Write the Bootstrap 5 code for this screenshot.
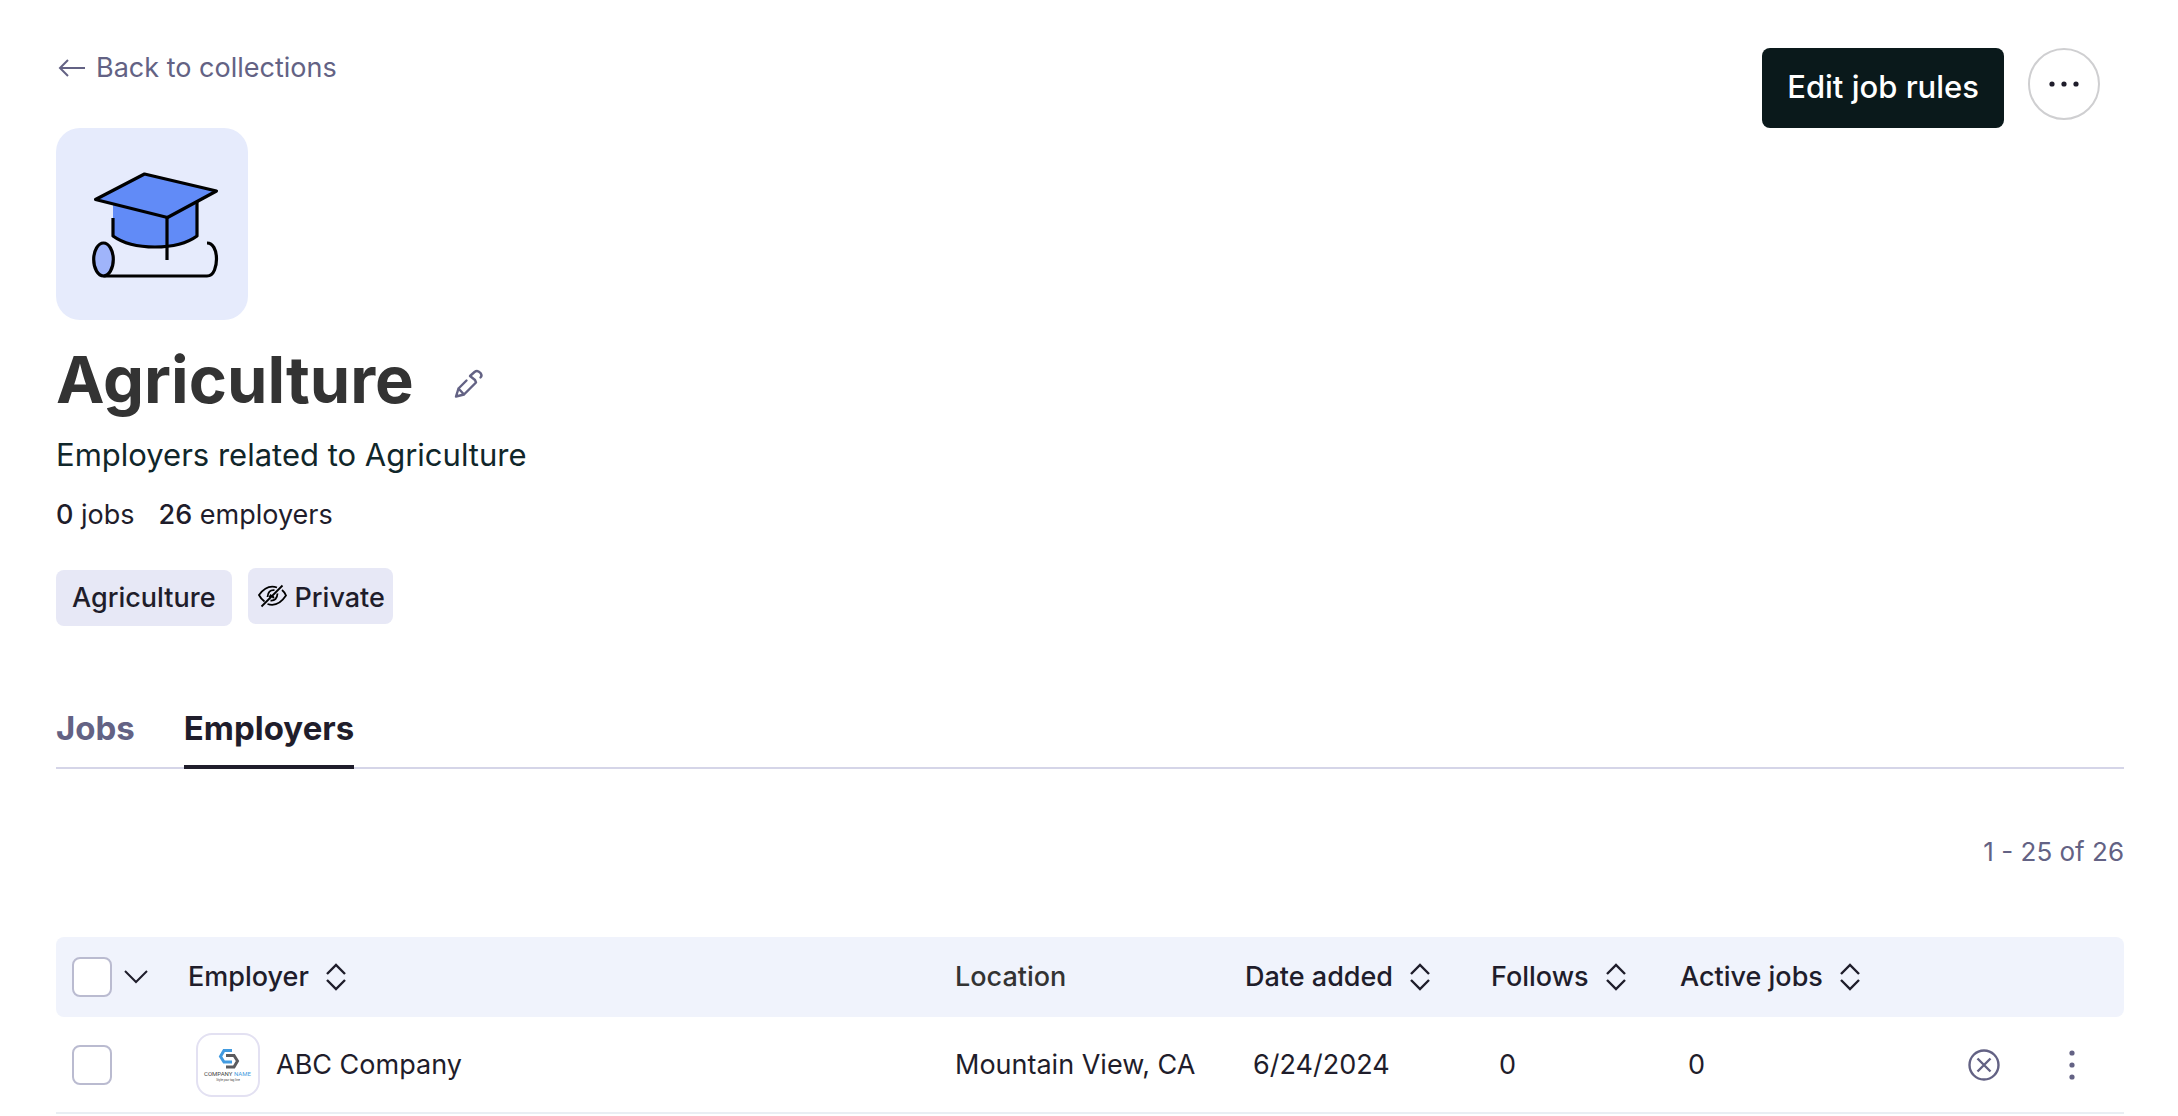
<!DOCTYPE html>
<html lang="en">
<head>
<meta charset="utf-8">
<meta name="viewport" content="width=device-width, initial-scale=1">
<title>Agriculture collection</title>
<link href="https://cdn.jsdelivr.net/npm/bootstrap@5.3.0/dist/css/bootstrap.min.css" rel="stylesheet">
<style>
  :root { --ink: #1f1d2b; --muted: #636284; --line: #d5d5e8; }
  body { font-family: Inter, "Liberation Sans", sans-serif; font-size: 27px; line-height: 40px; color: var(--ink); }
  svg { display: block; flex: none; }
  .plain { padding: 0; border: 0; background: none; color: var(--ink); }
  .page { padding: 48px 54px 0 56px; }
  .page-actions { gap: 24px; padding-right: 24px; }
  .back-link { gap: 10px; color: var(--muted); text-decoration: none; padding-bottom: 40px; }
  .btn-rules { height: 80px; padding: 0 25px 2px; font-size: 31px; font-weight: 500; color: #fff; background: #0a191b; border: 0; border-radius: 8px; }
  .btn-rules:hover { color: #fff; background: #1b2d30; }
  .btn-more { width: 72px; height: 72px; border: 2px solid #cfcfd1; border-radius: 50%; }
  .tile { width: 192px; height: 192px; border-radius: 24px; background: #e6ebfc; }
  .page-title { font-size: 65px; font-weight: 700; line-height: 80px; color: #333; }
  .title-row { gap: 39px; padding-top: 20px; }
  .subtitle { font-size: 31px; color: #10262a; padding-top: 15px; }
  .counts { gap: 24px; padding-top: 20px; }
  .counts b { font-weight: 500; }
  .tags { gap: 16px; padding-top: 33px; }
  .tag { padding: 8px 16px; border-radius: 8px; background: #e7e8f6; font-weight: 500; }
  .tag-private { gap: 8px; padding: 10px 8px 6px 10px; margin-bottom: 2px; }
  .tabs { gap: 49px; margin-top: 82px; border-bottom: 2px solid var(--line); }
  .tabs a { padding: 0 0 17px; margin-bottom: -2px; font-size: 33px; font-weight: 700; line-height: 40px; color: var(--muted); border-bottom: 4px solid transparent; text-decoration: none; }
  .tabs a.active { color: var(--ink); border-color: var(--ink); }
  .pager { padding: 63px 0 65px; font-size: 26px; color: var(--muted); }
  .grid-table { table-layout: fixed; border-collapse: separate; border-spacing: 0; width: 100%; }
  .grid-table th { height: 80px; padding: 0; font-weight: 500; background: #f0f3fc; }
  .grid-table th:first-child { border-radius: 8px 0 0 8px; padding-left: 16px; }
  .grid-table th:last-child { border-radius: 0 8px 8px 0; }
  .grid-table th.fixed-head { color: #333; }
  .grid-table td { height: 97px; padding: 0 0 0 8px; border-bottom: 2px solid #e9eef3; }
  .grid-table td:first-child { padding-left: 16px; }
  .grid-table td.flush { padding-left: 0; }
  .col-check { width: 132px; } .col-place { width: 290px; } .col-date { width: 246px; }
  .col-follows { width: 189px; } .col-active { width: 280px; } .col-remove { width: 96px; } .col-menu { width: 68px; }
  .sort { gap: 17px; font-weight: 500; }
  .box.form-check-input { width: 40px; height: 40px; margin: 0; border: 2px solid #babbd0; border-radius: 8px; }
  .logo { width: 64px; height: 64px; border: 2px solid #e3e1f2; border-radius: 16px; }
</style>
</head>
<body>
<main class="container-fluid page">
  <header class="d-flex justify-content-between align-items-start">
    <div>
      <a href="#" class="back-link d-inline-flex align-items-center">
        <svg width="30" height="26" viewBox="0 0 30 26" fill="none" stroke="currentColor" stroke-width="2"><path d="M29 13H4M12 5L4 13L12 21"/></svg>
        Back to collections
      </a>
      <div class="tile">
        <svg width="192" height="192" viewBox="0 0 192 192" fill="none" stroke="#000" stroke-width="3.2" stroke-linejoin="round">
          <path d="M57 75L111 89L141 73V108Q124 119 99 119Q72 119 57 108Z" fill="#618bf7" stroke="none"/>
          <path d="M57 90V108Q72 119 99 119Q126 119 141 108V74"/>
          <path d="M88.500 46L160.500 63L111.500 89.500L39.500 71.500Z" fill="#618bf7"/>
          <path d="M111 89V132"/>
          <ellipse cx="47.500" cy="131.500" rx="9.800" ry="16.500" fill="#9fb4fa"/>
          <path d="M47.500 148H151Q156 148 158.500 142Q160.500 137 160.500 131C160.500 122 157 115 151 115"/>
        </svg>
      </div>
    </div>
    <div class="page-actions d-flex">
      <button type="button" class="btn btn-rules">Edit job rules</button>
      <button type="button" class="plain btn-more d-flex align-items-center justify-content-center" aria-label="More actions">
        <svg width="30" height="6" viewBox="0 0 30 6" fill="#1f1d2b"><circle cx="3" cy="3" r="2.600"/><circle cx="15" cy="3" r="2.600"/><circle cx="27" cy="3" r="2.600"/></svg>
      </button>
    </div>
  </header>

  <div class="title-row d-flex align-items-center">
    <h1 class="page-title mb-0">Agriculture</h1>
    <button type="button" class="plain" aria-label="Edit name">
      <svg width="32" height="40" viewBox="0 -8 32 40" fill="none" stroke="#636284" stroke-width="2.400" stroke-linejoin="round" stroke-linecap="round"><path d="M13.500 12.500L5.500 20.500L3 28.500L11 26.500L23 14.500L22 12L17 8L21.500 4Q24.500 1.500 27.500 5Q29.500 7.500 27.500 9.500M5.500 20.500L11 26.500"/></svg>
    </button>
  </div>
  <p class="subtitle mb-0">Employers related to Agriculture</p>
  <p class="counts d-flex mb-0"><span><b>0</b> jobs</span><span><b>26</b> employers</span></p>
  <div class="tags d-flex align-items-end">
    <span class="tag">Agriculture</span>
    <span class="tag tag-private d-flex align-items-center">
      <svg width="29" height="28" viewBox="0 0 29 28" fill="none" stroke="#000" stroke-width="1.800"><path d="M24.500 1.500L3.500 22.500M19 3.500Q9 0 1 11Q3 15 6.500 17.500M24 6Q27 8.500 28 11.500Q20 23.500 9.500 20M16.500 6.200Q10 5.500 9.500 13M13 10.500L11.500 13.500M12.500 16.500Q19 17 19.500 9.500M16 12.500L14.500 14"/></svg>
      Private
    </span>
  </div>

  <nav class="tabs nav">
    <a href="#">Jobs</a>
    <a href="#" class="active" aria-current="page">Employers</a>
  </nav>
  <div class="pager text-end">1 - 25 of 26</div>

  <table class="grid-table">
    <colgroup><col class="col-check"><col><col class="col-place"><col class="col-date"><col class="col-follows"><col class="col-active"><col class="col-remove"><col class="col-menu"></colgroup>
    <thead>
      <tr>
        <th scope="col">
          <div class="d-flex align-items-center">
            <input type="checkbox" class="form-check-input box" aria-label="Select all employers">
            <button type="button" class="plain ms-2 ps-1" aria-label="Selection options"><svg width="24" height="14" viewBox="0 0 24 14" fill="none" stroke="#1f1d2b" stroke-width="2"><path d="M1 1L12 12L23 1"/></svg></button>
          </div>
        </th>
        <th scope="col"><button type="button" class="plain sort d-flex align-items-center">Employer <svg width="20" height="28" viewBox="0 0 20 28" fill="none" stroke="currentColor" stroke-width="2.400"><path d="M1 11L10 2L19 11M1 17L10 26L19 17"/></svg></button></th>
        <th scope="col" class="fixed-head">Location</th>
        <th scope="col"><button type="button" class="plain sort d-flex align-items-center">Date added <svg width="20" height="28" viewBox="0 0 20 28" fill="none" stroke="currentColor" stroke-width="2.400"><path d="M1 11L10 2L19 11M1 17L10 26L19 17"/></svg></button></th>
        <th scope="col"><button type="button" class="plain sort d-flex align-items-center">Follows <svg width="20" height="28" viewBox="0 0 20 28" fill="none" stroke="currentColor" stroke-width="2.400"><path d="M1 11L10 2L19 11M1 17L10 26L19 17"/></svg></button></th>
        <th scope="col"><button type="button" class="plain sort d-flex align-items-center">Active jobs <svg width="20" height="28" viewBox="0 0 20 28" fill="none" stroke="currentColor" stroke-width="2.400"><path d="M1 11L10 2L19 11M1 17L10 26L19 17"/></svg></button></th>
        <th></th><th></th>
      </tr>
    </thead>
    <tbody>
      <tr>
        <td><input type="checkbox" class="form-check-input box d-block" aria-label="Select ABC Company"></td>
        <td>
          <div class="d-flex align-items-center gap-3">
            <svg class="logo" viewBox="0 0 60 60" role="img" aria-label="Company logo">
              <path d="M34 15.500H26L22.500 21.500L26 27H34" fill="none" stroke="#429be0" stroke-width="3"/>
              <path d="M28 20.500H36L39.500 26L36 32H28" fill="none" stroke="#5b5b5e" stroke-width="3"/>
              <text x="6" y="41" font-family="Roboto" font-size="6" fill="#444">COMPANY</text>
              <text x="36" y="41" font-family="Roboto" font-size="6" fill="#429be0">NAME</text>
              <text x="30" y="45.500" font-family="Roboto" font-size="3" text-anchor="middle" fill="#444">Style your tag line</text>
            </svg>
            <span>ABC Company</span>
          </div>
        </td>
        <td class="flush">Mountain View, CA</td>
        <td>6/24/2024</td>
        <td>0</td>
        <td>0</td>
        <td><button type="button" class="plain d-block" aria-label="Remove ABC Company"><svg width="32" height="32" viewBox="0 0 32 32" fill="none" stroke="#636284" stroke-width="2.400"><circle cx="16" cy="16" r="14.500"/><path d="M9.500 9.500L22.500 22.500M22.500 9.500L9.500 22.500"/></svg></button></td>
        <td><button type="button" class="plain d-block" aria-label="More actions for ABC Company"><svg width="16" height="30" viewBox="0 0 16 30" fill="#636284"><circle cx="8" cy="3" r="2.600"/><circle cx="8" cy="15" r="2.600"/><circle cx="8" cy="27" r="2.600"/></svg></button></td>
      </tr>
    </tbody>
  </table>
</main>
<script src="https://cdn.jsdelivr.net/npm/bootstrap@5.3.0/dist/js/bootstrap.bundle.min.js"></script>
</body>
</html>
